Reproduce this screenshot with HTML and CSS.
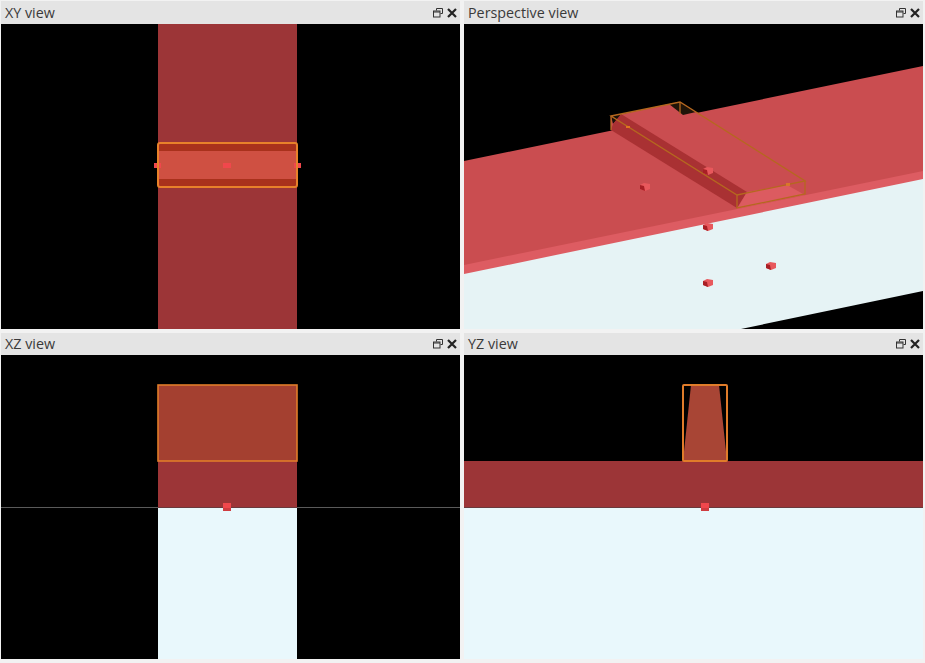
FILE: index.html
```html
<!DOCTYPE html>
<html lang="en">
<head>
    <meta charset="UTF-8">
    <meta name="viewport" content="width=device-width, initial-scale=1.0">
    <title>Viewports</title>
    <link rel="stylesheet" href="styles.css">
</head>
<body>
    <svg class="defs" width="0" height="0" aria-hidden="true">
        <defs>
            <symbol id="icon-restore" viewBox="0 0 10 10">
                <path d="M3.5 2.5V.5h6v5h-2" fill="none" stroke="#333" stroke-width="1"/>
                <rect x=".5" y="3" width="6.5" height="6" fill="none" stroke="#333" stroke-width="1"/>
                <path d="M.5 4h6.500" stroke="#333" stroke-width="1"/>
            </symbol>
            <symbol id="icon-close" viewBox="0 0 10 10">
                <path d="M1 1l8 8M9 1l-8 8" fill="none" stroke="#222" stroke-width="2.200"/>
            </symbol>
            <g id="marker">
                <polygon points="-5,-2 -1,-4 5,-3 5,2 0,4 -5,2" fill="#e8585c"/>
                <polygon points="-5,-2 -1,-1 0,4 -5,2" fill="#a81f25"/>
            </g>
        </defs>
    </svg>

    <div class="viewports">
        <!-- XY -->
        <section class="panel">
            <div class="title-bar">
                <span class="title">XY view</span>
                <svg class="icon"><use href="#icon-restore"/></svg>
                <svg class="icon"><use href="#icon-close"/></svg>
            </div>
            <svg class="view" viewBox="1 24 459 305">
                <rect x="1" y="24" width="459" height="305" fill="#000"/>
                <rect x="158" y="24" width="139" height="305" fill="#9c3537"/>
                <rect x="158" y="143" width="139" height="44" fill="#a9311c"/>
                <rect x="158" y="151" width="139" height="28" fill="#cf5042"/>
                <rect x="154" y="163" width="7" height="5" fill="#f0474c"/>
                <rect x="223" y="163" width="8" height="5" fill="#f0474c"/>
                <rect x="294" y="163" width="7" height="5" fill="#f0474c"/>
                <rect x="158" y="143" width="139" height="44" rx="2" fill="none" stroke="#e8812a" stroke-width="2"/>
            </svg>
        </section>

        <!-- Perspective -->
        <section class="panel">
            <div class="title-bar">
                <span class="title">Perspective view</span>
                <svg class="icon"><use href="#icon-restore"/></svg>
                <svg class="icon"><use href="#icon-close"/></svg>
            </div>
            <svg class="view" viewBox="464 24 459 305">
                <rect x="464" y="24" width="459" height="305" fill="#000"/>
                <polygon points="464,270 923,175 923,291 741,329 464,329" fill="#e6f3f5"/>
                <polygon points="464,260 923,166 923,179 464,274" fill="#dd5c62"/>
                <polygon points="464,161 923,66 923,171 464,265" fill="#ca4d50"/>
                <polygon points="611,116 622,114 669,104 680,102 696,112 806,181 805,194 737,208 611,130" fill="#ca4d50"/>
                <polygon points="611,116 622,114 613,124" fill="#1a0f08"/>
                <polygon points="669,104 680,102 696,112 683,115" fill="#1f1408"/>
                <polygon points="621,114 747,192 737,208 611,130 613,124" fill="#a93133"/>
                <polygon points="747,192 787,185 805,195 737,209" fill="#dc5b60"/>
                <g fill="none" stroke="#b5681f" stroke-width="1.300">
                    <polygon points="611,116 680,102 805,181 737,195"/>
                    <path d="M611 116V130M737 195V208L805 194V181M680 102V114"/>
                </g>
                <rect x="626" y="126" width="4" height="2" fill="#e0761f"/>
                <rect x="786" y="183" width="4" height="3" fill="#d9772a"/>
                <use href="#marker" x="708" y="171"/>
                <use href="#marker" x="645" y="187"/>
                <use href="#marker" x="708" y="227"/>
                <use href="#marker" x="771" y="266"/>
                <use href="#marker" x="708" y="283"/>
            </svg>
        </section>

        <!-- XZ -->
        <section class="panel panel-low">
            <div class="title-bar">
                <span class="title">XZ view</span>
                <svg class="icon"><use href="#icon-restore"/></svg>
                <svg class="icon"><use href="#icon-close"/></svg>
            </div>
            <svg class="view" viewBox="1 355 459 304">
                <rect x="1" y="355" width="459" height="304" fill="#000"/>
                <rect x="1" y="507" width="459" height="1" fill="#5a5a5a"/>
                <rect x="158" y="461" width="139" height="46" fill="#9c3537"/>
                <rect x="158" y="507" width="139" height="1" fill="#6a3a3c"/>
                <rect x="158" y="508" width="139" height="151" fill="#e9f8fc"/>
                <rect x="158" y="385" width="139" height="76" fill="#a44030" stroke="#e07c2a" stroke-width="1.600"/>
                <rect x="223" y="503" width="8" height="5" fill="#f0474c"/>
                <rect x="223" y="508" width="8" height="3" fill="#cf3c40"/>
            </svg>
        </section>

        <!-- YZ -->
        <section class="panel panel-low">
            <div class="title-bar">
                <span class="title">YZ view</span>
                <svg class="icon"><use href="#icon-restore"/></svg>
                <svg class="icon"><use href="#icon-close"/></svg>
            </div>
            <svg class="view" viewBox="464 355 459 304">
                <rect x="464" y="355" width="459" height="304" fill="#000"/>
                <rect x="464" y="461" width="459" height="46" fill="#9c3537"/>
                <rect x="464" y="507" width="459" height="1" fill="#6a3a3c"/>
                <rect x="464" y="508" width="459" height="151" fill="#e9f8fc"/>
                <polygon points="691,385 719,385 727,461 683,461" fill="#a84535"/>
                <rect x="683" y="385" width="44" height="76" rx="1" fill="none" stroke="#e07c2a" stroke-width="2"/>
                <rect x="701" y="503" width="8" height="5" fill="#f0474c"/>
                <rect x="701" y="508" width="8" height="3" fill="#cf3c40"/>
            </svg>
        </section>
    </div>
</body>
</html>
```

FILE: styles.css
```css
html, body {
    margin: 0;
    padding: 0;
    background-color: #f2f2f2;
}
.defs {
    position: absolute;
}
.viewports {
    display: grid;
    grid-template-columns: 459px 459px;
    column-gap: 4px;
    row-gap: 4px;
    padding: 1px 0 0 1px;
}
.panel {
    display: flex;
    flex-direction: column;
}
.title-bar {
    display: flex;
    align-items: center;
    gap: 4px;
    height: 23px;
    padding: 0 3px 0 4px;
    background-color: #e4e4e4;
    font-family: "Open Sans", sans-serif;
    font-size: 14.3px;
    color: #3a3a3a;
}
.title {
    flex: 1;
}
.icon {
    width: 10px;
    height: 10px;
}
.view {
    display: block;
    width: 459px;
    height: 305px;
}
.panel-low .title-bar {
    height: 21px;
    padding-bottom: 1px;
}
.panel-low .view {
    height: 304px;
}
```
